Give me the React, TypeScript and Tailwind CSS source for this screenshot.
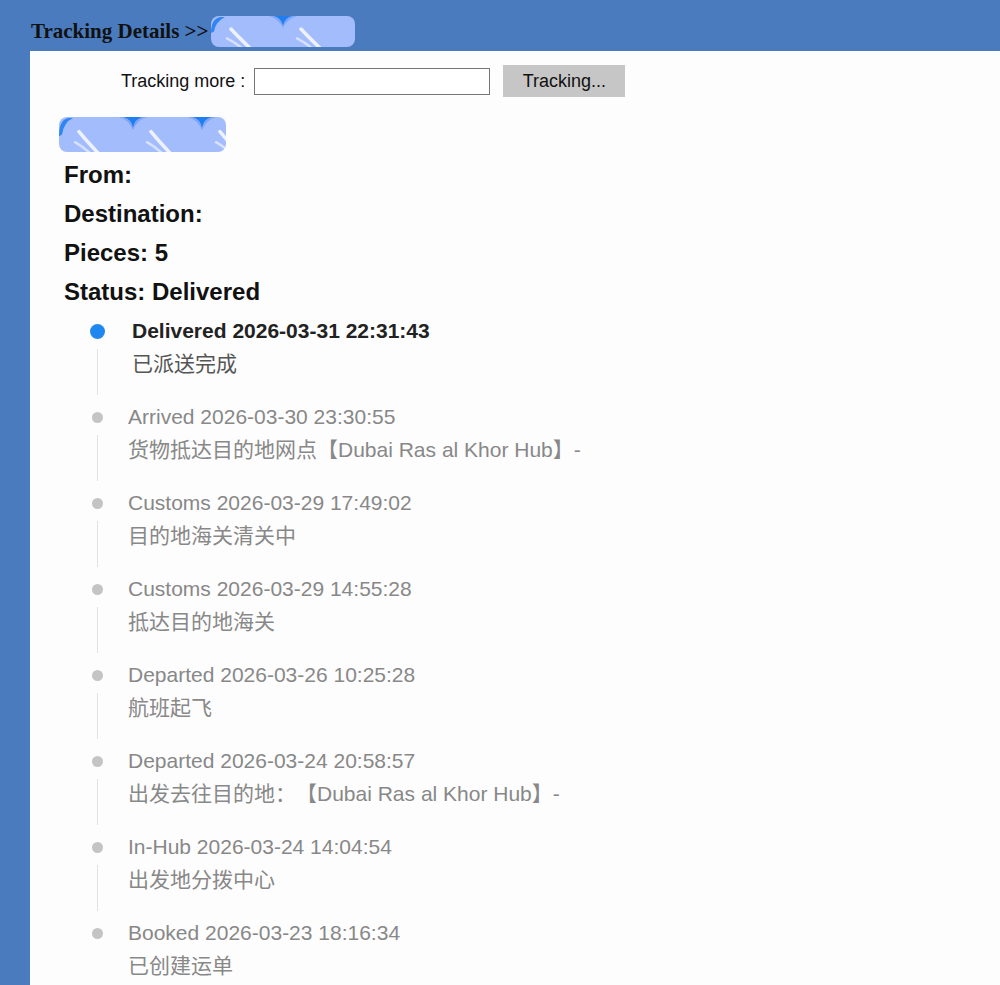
import React from "react";

type Event = {
  title: string;
  desc: string;
};

const events: Event[] = [
  { title: "Delivered 2026-03-31 22:31:43", desc: "已派送完成" },
  { title: "Arrived 2026-03-30 23:30:55", desc: "货物抵达目的地网点【Dubai Ras al Khor Hub】-" },
  { title: "Customs 2026-03-29 17:49:02", desc: "目的地海关清关中" },
  { title: "Customs 2026-03-29 14:55:28", desc: "抵达目的地海关" },
  { title: "Departed 2026-03-26 10:25:28", desc: "航班起飞" },
  { title: "Departed 2026-03-24 20:58:57", desc: "出发去往目的地：【Dubai Ras al Khor Hub】-" },
  { title: "In-Hub 2026-03-24 14:04:54", desc: "出发地分拨中心" },
  { title: "Booked 2026-03-23 18:16:34", desc: "已创建运单" },
];

// redaction sticker drawn over the tracking number
function Sticker({ width, height, notches }: { width: number; height: number; notches: number[] }) {
  const strokes = [0, ...notches];
  return (
    <svg width={width} height={height} viewBox={`0 0 ${width} ${height}`} className="block">
      <rect x="0" y="0" width={width} height={height} rx="8" fill="#a3bcfb" />
      <path d={`M0,${height * 0.55} Q0,2 10,1 L14,1 Q5,5 3,${height * 0.5} Z`} fill="#2f86f2" />
      {notches.map((n) => (
        <g key={n}>
          <path d={`M${n - 14},0 Q${n - 4},3 ${n},${height * 0.38} Q${n + 4},3 ${n + 14},0 Z`} fill="#7fa5f6" />
          <path d={`M${n - 9},0 Q${n - 2},2 ${n},${height * 0.3} Q${n + 2},2 ${n + 9},0 Z`} fill="#1f7ff0" />
        </g>
      ))}
      {strokes.map((s, i) => {
        const x = s + (i === 0 ? 20 : 18);
        return (
          <g key={i} stroke="#ffffff" strokeLinecap="round" fill="none">
            <path d={`M${x},${height * 0.42} Q${x + 8},${height * 0.7} ${x + 20},${height + 2}`} strokeWidth="3.5" opacity="0.8" />
            <path d={`M${x - 4},${height * 0.72} Q${x + 4},${height * 0.85} ${x + 12},${height + 2}`} strokeWidth="2.5" opacity="0.55" />
          </g>
        );
      })}
    </svg>
  );
}

export default function App() {
  return (
    <div className="min-h-screen bg-[#4a7bbe] flex flex-col" style={{ fontFamily: '"Liberation Sans", Arial, "Noto Sans CJK SC", sans-serif' }}>
      <div className="h-[51px] flex items-center pl-[31px] pt-[11px]">
        <span className="text-[21px] font-bold text-[#111] leading-none" style={{ fontFamily: '"Liberation Serif", "Times New Roman", serif' }}>
          Tracking Details &gt;&gt;
        </span>
        <div className="ml-[2px] mt-[1px]">
          <Sticker width={144} height={31} notches={[72]} />
        </div>
      </div>

      <div className="flex-1 ml-[30px] bg-[#fdfdfd] pl-[34px] pt-[14px] pb-[20px]">
        <div className="flex items-center ml-[57px] h-[32px]">
          <span className="text-[18px] text-[#111]">Tracking more :</span>
          <input type="text" className="ml-[9px] w-[236px] h-[27px] border border-[#767676] bg-white outline-none" />
          <button className="ml-[13px] w-[122px] h-[32px] bg-[#c6c6c6] text-[18px] text-[#111]">Tracking...</button>
        </div>

        <div className="mt-[20px] ml-[-5px]">
          <Sticker width={167} height={35} notches={[74, 143]} />
        </div>

        <div className="mt-[3px] text-[24px] font-bold text-[#111] leading-[39px]">
          <div>From:</div>
          <div>Destination:</div>
          <div>Pieces: 5</div>
          <div>Status: Delivered</div>
        </div>

        <div className="mt-[4px] ml-[23px]">
          {events.map((ev, i) => {
            const first = i === 0;
            const last = i === events.length - 1;
            return (
              <div key={i} className="flex">
                <div className="w-[20px] flex flex-col items-center">
                  <div className="h-[32px] flex items-center justify-center">
                    {first ? (
                      <span className="block w-[15px] h-[15px] rounded-full bg-[#1e88f0]" />
                    ) : (
                      <span className="block w-[11px] h-[11px] rounded-full bg-[#c4c4c4]" />
                    )}
                  </div>
                  {!last && <div className="flex-1 w-px bg-[#e2e2e2] mt-[2px] mb-[6px]" />}
                </div>
                <div className={`${first ? "ml-[25px]" : "ml-[21px]"} pb-[20px] text-[21px]`}>
                  <div className={`leading-[32px] ${first ? "font-bold text-[#222]" : "text-[#888]"}`}>{ev.title}</div>
                  <div className={`leading-[34px] [text-spacing-trim:space-all] ${first ? "text-[#555]" : "text-[#888]"}`}>{ev.desc}</div>
                </div>
              </div>
            );
          })}
        </div>
      </div>
    </div>
  );
}
